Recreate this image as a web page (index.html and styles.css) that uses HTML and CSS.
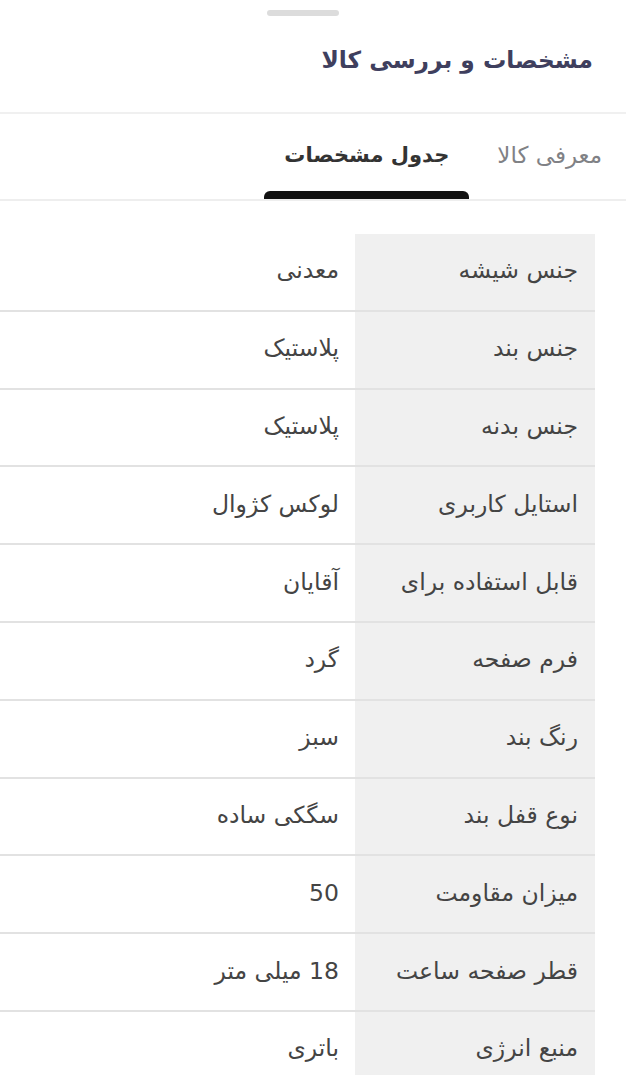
FILE: index.html
```html
<!DOCTYPE html>
<html lang="fa" dir="rtl">
<head>
<meta charset="utf-8">
<link rel="stylesheet" href="styles.css">
</head>
<body>
<div class="sheet">
  <div class="handle-wrap"><div class="handle"></div></div>
  <h1 class="title">مشخصات و بررسی کالا</h1>
  <div class="tabs">
    <div class="tab">معرفی کالا</div>
    <div class="tab active">جدول مشخصات</div>
  </div>
  <div class="specs">
    <div class="row"><div class="label">جنس شیشه</div><div class="value">معدنی</div></div>
    <div class="row"><div class="label">جنس بند</div><div class="value">پلاستیک</div></div>
    <div class="row"><div class="label">جنس بدنه</div><div class="value">پلاستیک</div></div>
    <div class="row"><div class="label">استایل کاربری</div><div class="value">لوکس کژوال</div></div>
    <div class="row"><div class="label">قابل استفاده برای</div><div class="value">آقایان</div></div>
    <div class="row"><div class="label">فرم صفحه</div><div class="value">گرد</div></div>
    <div class="row"><div class="label">رنگ بند</div><div class="value">سبز</div></div>
    <div class="row"><div class="label">نوع قفل بند</div><div class="value">سگکی ساده</div></div>
    <div class="row"><div class="label">میزان مقاومت</div><div class="value">50</div></div>
    <div class="row"><div class="label">قطر صفحه ساعت</div><div class="value">18 میلی متر</div></div>
    <div class="row"><div class="label">منبع انرژی</div><div class="value">باتری</div></div>
  </div>
</div>
</body>
</html>
```
FILE: styles.css
```css
html, body {
  margin: 0;
  padding: 0;
  background: #ffffff;
}
body {
  font-family: "DejaVu Sans", "Noto Sans", sans-serif;
  direction: rtl;
  overflow: hidden;
}
.sheet {
  width: 626px;
}
.handle-wrap {
  display: flex;
  justify-content: center;
  padding-top: 10px;
}
.handle {
  width: 72px;
  height: 6px;
  border-radius: 3px;
  background: #dcdcdc;
  margin-right: 20px;
}
.title {
  margin: 0;
  padding: 27px 33px 0 0;
  height: 98px;
  box-sizing: border-box;
  font-size: 23.3px;
  font-weight: bold;
  color: #3f3f5e;
  line-height: 34px;
  border-bottom: 2px solid #f0f0f0;
}
.tabs {
  display: flex;
  gap: 8px;
  padding-right: 4px;
  height: 87px;
  box-sizing: border-box;
  border-bottom: 2px solid #eeeeee;
}
.tab {
  position: relative;
  padding: 26px 20px 0;
  font-size: 23px;
  line-height: 30px;
  color: #808185;
}
.tab.active {
  color: #333333;
  font-size: 21px;
  font-weight: bold;
}
.tab.active::after {
  content: "";
  position: absolute;
  left: 0;
  right: 0;
  bottom: 0;
  height: 8px;
  background: #111111;
  border-radius: 6px 6px 0 0;
}
.specs {
  margin: 33px 31px 0 0;
  width: 595px;
}
.row {
  display: flex;
  height: 77.8px;
  box-sizing: border-box;
  border-bottom: 2px solid #e2e2e2;
}
.label {
  width: 240px;
  box-sizing: border-box;
  background: #f0f0f0;
  padding: 0 17px 3px 0;
  display: flex;
  align-items: center;
  font-size: 23.5px;
  color: #444444;
}
.value {
  flex: 1;
  padding: 0 16px 3px 0;
  display: flex;
  align-items: center;
  font-size: 23.5px;
  color: #444444;
}
```
